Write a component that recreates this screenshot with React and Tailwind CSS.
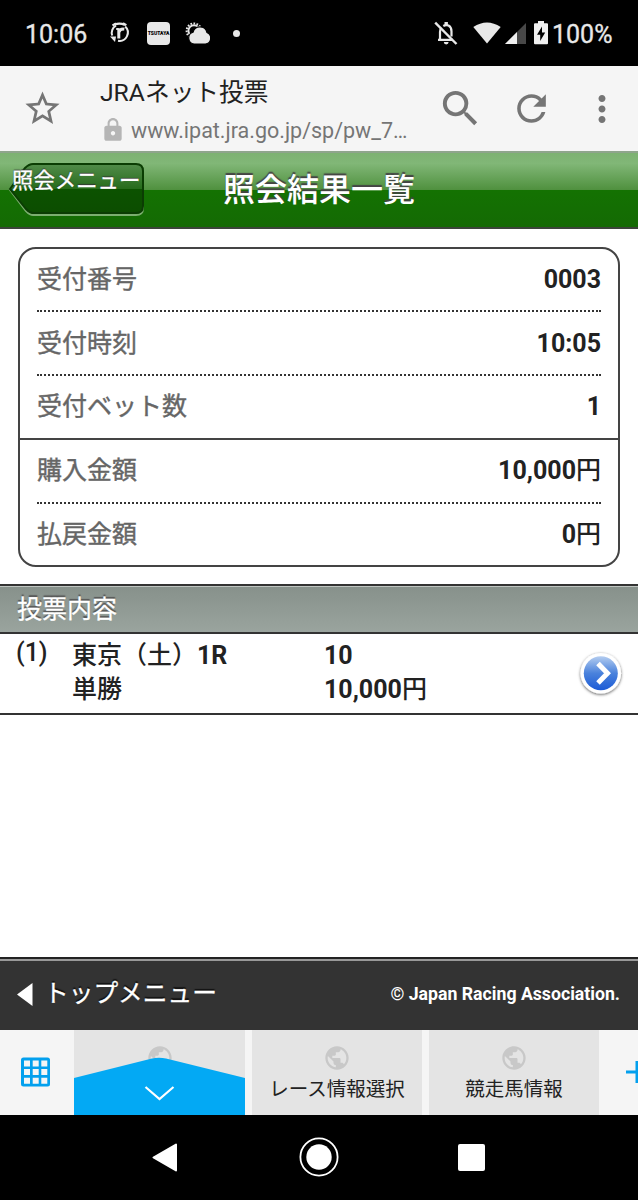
import React from "react";
import { MdStarBorder, MdLock, MdSearch, MdRefresh, MdMoreVert, MdPublic } from "react-icons/md";

const details = [
  { label: "受付番号", value: "0003", line: "dotted", pad: "pt-[2px]" },
  { label: "受付時刻", value: "10:05", line: "dotted", pad: "pt-[2px]" },
  { label: "受付ベット数", value: "1", line: "solid", pad: "" },
  { label: "購入金額", value: "10,000", unit: "円", line: "dotted", pad: "" },
  { label: "払戻金額", value: "0", unit: "円", line: "none", pad: "pb-[2px]" },
];

function StatusBar() {
  return (
    <div className="flex h-[66px] items-center bg-black text-[25px] leading-none text-[#e8e8e8]">
      <span className="ml-[25px] w-[64px] whitespace-nowrap pt-[2px] [-webkit-text-stroke:0.3px]">10:06</span>
      <svg className="ml-[20px]" width="22" height="22" viewBox="0 0 22 22" fill="none" stroke="currentColor">
        <path d="M7 3.6A8.2 8.2 0 0 0 3.2 13.5M9 18.8A8.3 8.3 0 0 0 16.2 4.6" strokeWidth="2" />
        <path d="M3.5 3.5 7 1.5M14 1.3l3.4 1.8M6 2.6Q10.5.5 16 3" strokeWidth="2.2" />
        <path d="M9.8 16.5V6.3M10 10Q11 6.6 15.3 7.2" strokeWidth="3" />
        <path d="M7.2 7h2.5" strokeWidth="2" />
        <path d="M1 14.5h6L6 20z" fill="currentColor" stroke="none" />
      </svg>
      <span className="ml-[16px] flex h-[23px] w-[23px] items-center justify-center rounded-[4px] bg-[#e8e8e8] text-[5px] font-black text-black">TSUTAYA</span>
      <svg className="ml-[15px]" width="25" height="23" viewBox="0 0 25 23">
        <circle cx="9" cy="8.8" r="7.4" fill="none" stroke="#e8e8e8" strokeWidth="2" strokeDasharray="1.7 1.4" />
        <circle cx="9" cy="8.8" r="5.6" fill="none" stroke="#e8e8e8" strokeWidth="2" />
        <path d="M9 22a6 6 0 0 1-1-11.7A7.2 7.2 0 0 1 22 10.5a6 6 0 0 1-1.5 11.5z" fill="#e8e8e8" stroke="#000" strokeWidth="1.2" />
      </svg>
      <span className="ml-[23px] h-[7px] w-[7px] rounded-full bg-[#e8e8e8]" />
      <svg className="ml-[194px]" width="24" height="24" viewBox="0 0 24 24" fill="none" stroke="currentColor" strokeWidth="2">
        <path d="M4 18.8h15M6 18v-7q0-2.5 1.3-4.3M9.3 5Q12 3.4 14.5 4.6q3 1.5 3 5.9v5" strokeWidth="2.2" />
        <path d="M12.2 1v3" strokeWidth="3.4" />
        <path d="M1.2 1.7 22.5 23" strokeWidth="2.4" />
        <path d="M9.8 21h4.8a2.4 2.4 0 0 1-4.8 0z" fill="currentColor" stroke="none" />
      </svg>
      <svg className="ml-[15px]" width="28" height="22" viewBox="0 0 28 22" fill="currentColor">
        <path d="M.3 5Q14-4.2 27.7 5L14 21.5z" />
      </svg>
      <svg className="ml-[4px]" width="21" height="21" viewBox="0 0 21 21">
        <path d="M0 21 21 0v21z" fill="#484848" />
        <path d="M0 21 12 9v12z" fill="#f0f0f0" />
      </svg>
      <svg className="ml-[8px]" width="14" height="24" viewBox="0 0 14 24">
        <path d="M4 0h6v2.3h3q1 0 1 1v19q0 1-1 1H1q-1 0-1-1v-19q0-1 1-1h3z" fill="#f0f0f0" />
        <path d="m8 5.5-5 8.3h3.2V20l5-8.5H8z" fill="#000" />
      </svg>
      <span className="ml-[4px] whitespace-nowrap pt-[2px] [-webkit-text-stroke:0.3px]">100%</span>
    </div>
  );
}

function Toolbar() {
  return (
    <div className="flex h-[85px] bg-[#f5f5f5] text-[#757575]">
      <MdStarBorder className="mt-[22px] ml-[22px] h-[41px] w-[41px] shrink-0" />
      <div className="ml-[36px] w-[320px] shrink-0">
        <div className="mt-[8px] h-[37px] pl-px text-[24.7px] leading-[38px] whitespace-nowrap text-[#212121]">JRAネット投票</div>
        <div className="flex h-[38px] items-center">
          <MdLock className="mr-[5px] ml-[1px] h-[26px] w-[26px] text-[#b5b5b5]" />
          <span className="pt-[2px] text-[21.5px] leading-[36px] whitespace-nowrap">www.ipat.jra.go.jp/sp/pw_7…</span>
        </div>
      </div>
      <MdSearch className="mt-[19px] ml-[18px] h-[47px] w-[47px] shrink-0" />
      <MdRefresh className="mt-[21px] ml-[26px] h-[43px] w-[43px] shrink-0" />
      <MdMoreVert className="mt-[22px] ml-[28px] h-[42px] w-[42px] shrink-0" />
    </div>
  );
}

function PageHeader() {
  return (
    <div className="relative flex h-[78px] justify-center border-t-2 border-b-2 border-t-[#8fa58c] border-b-[#3c443a] bg-[linear-gradient(#7db272_0,#81b777_14%,#50913f_49.5%,#147202_50%,#146a04_100%)]">
      <svg className="absolute top-[9px] left-[8px]" width="138" height="55" viewBox="0 0 138 55">
        <defs>
          <linearGradient id="back" x1="0" y1="0" x2="0" y2="1">
            <stop offset="0" stopColor="#528c4a" />
            <stop offset=".5" stopColor="#276c1c" />
            <stop offset=".51" stopColor="#0c5200" />
            <stop offset="1" stopColor="#0c4d00" />
          </linearGradient>
        </defs>
        <path d="M2 28 17 7Q21 3 25 3H128Q135 3 135 10V46Q135 53 128 53H25Q22 53 18 49z" fill="none" stroke="#7cae70" strokeWidth="2" />
        <path d="M2 27 17 6Q21 2 25 2H128Q135 2 135 9V44Q135 51 128 51H25Q22 51 18 47z" fill="url(#back)" stroke="#0b3d03" strokeWidth="2" />
      </svg>
      <span className="absolute top-[12px] left-[12px] text-[21.4px] leading-[32px] whitespace-nowrap text-white [-webkit-text-stroke:0.3px] [text-shadow:0_-1px_1px_#333]">照会メニュー</span>
      <h1 className="h-[72px] text-[32px] leading-[74px] font-medium whitespace-nowrap text-white [text-shadow:0_-2px_1px_#444]">照会結果一覧</h1>
    </div>
  );
}

function DetailRow({ label, value, unit, line, pad }) {
  const border = line === "dotted" ? "border-b-2 border-dotted border-[#333]" : "";
  return (
    <div className={line === "solid" ? "h-16 border-b-2 border-[#444] px-[17px]" : "h-16 px-[17px]"}>
      <div className={`flex h-full items-center justify-between ${border} ${pad} text-[25px]`}>
        <span className="text-[#666] [-webkit-text-stroke:0.4px]">{label}</span>
        <span className="font-bold text-[#222]">
          {value}
          {unit && <span className="font-medium">{unit}</span>}
        </span>
      </div>
    </div>
  );
}

function BetRow() {
  return (
    <div className="flex h-[81px] border-b-2 border-[#333] text-[25px] leading-[34px] font-bold text-[#222]">
      <span className="mt-[2px] ml-[16px] w-[56px] font-medium">(1)</span>
      <div className="mt-[5px] w-[252px] whitespace-nowrap">
        <div><span className="font-medium">東京（土）</span>1R</div>
        <div className="font-medium">単勝</div>
      </div>
      <div className="mt-[5px] w-[250px]">
        <div>10</div>
        <div>10,000<span className="font-medium">円</span></div>
      </div>
      <svg className="mt-[14px]" width="54" height="54" viewBox="0 0 54 54">
        <defs>
          <linearGradient id="go" x1="0" y1="0" x2="0" y2="1">
            <stop offset="0" stopColor="#b4cdf0" />
            <stop offset=".5" stopColor="#4a82dc" />
            <stop offset="1" stopColor="#1c5bd6" />
          </linearGradient>
          <filter id="shade" x="-30%" y="-30%" width="160%" height="160%">
            <feDropShadow dx="0" dy="1" stdDeviation="1.5" floodColor="#000" floodOpacity=".65" />
          </filter>
        </defs>
        <circle cx="26.8" cy="25.2" r="20.3" fill="#fff" filter="url(#shade)" />
        <circle cx="26.8" cy="25.2" r="17" fill="url(#go)" />
        <path d="m24 15.5 9.5 9.7-9.5 9.7" fill="none" stroke="#fff" strokeWidth="5" />
      </svg>
    </div>
  );
}

function Tab({ label }) {
  return (
    <div className="mr-[7px] flex h-full w-[170px] shrink-0 flex-col items-center bg-[#e4e4e4] pt-[14px]">
      <MdPublic className="h-[28px] w-[28px] text-[#c8c8c8]" />
      <span className="mt-[3px] text-[19.5px] leading-[30px] whitespace-nowrap text-[#222]">{label}</span>
    </div>
  );
}

function TabBar() {
  return (
    <div className="flex h-[85px] overflow-hidden bg-[#f5f5f5]">
      <svg className="mt-[27px] mr-[24px] ml-[21px] shrink-0" width="29" height="30" viewBox="0 0 29 30">
        <rect y=".5" width="29" height="29" rx="2.5" fill="#03a0ee" />
        <path d="M3 3.5h6v6H3zM11.7 3.5h6v6h-6zM20.3 3.5h6v6h-6zM3 12h6v6H3zM11.7 12h6v6h-6zM20.3 12h6v6h-6zM3 20.7h6v6H3zM11.7 20.7h6v6h-6zM20.3 20.7h6v6h-6z" fill="#f5f5f5" />
      </svg>
      <div className="relative mr-[7px] flex h-full w-[171px] shrink-0 justify-center bg-[#e4e4e4] pt-[14px]">
        <MdPublic className="h-[28px] w-[28px] text-[#c8c8c8]" />
        <svg className="absolute inset-0" width="171" height="85" viewBox="0 0 171 85">
          <path d="M0 48 78 28.5Q85 27 92 28.5L171 48V85H0z" fill="#03a9f4" />
          <path d="m71.5 57 14 12 14-12" fill="none" stroke="#fff" strokeWidth="2.2" />
        </svg>
      </div>
      <Tab label="レース情報選択" />
      <Tab label="競走馬情報" />
      <svg className="mt-[31px] ml-[20px] shrink-0" width="22" height="22" viewBox="0 0 22 22" stroke="#03a0ee" strokeWidth="3">
        <path d="M0 11h22M11 0v22" />
      </svg>
    </div>
  );
}

function NavBar() {
  return (
    <div className="flex h-[85px] items-center bg-black">
      <svg className="ml-[151px]" width="27" height="30" viewBox="0 0 27 30">
        <path d="M2.5 14.5 25 1.5v26z" fill="#fff" stroke="#fff" strokeWidth="2" strokeLinejoin="round" />
      </svg>
      <svg className="-mt-px ml-[121px]" width="40" height="40" viewBox="0 0 40 40">
        <circle cx="20" cy="20" r="18.6" fill="none" stroke="#fff" strokeWidth="1.8" />
        <circle cx="20" cy="20" r="12.7" fill="#fff" />
      </svg>
      <div className="ml-[119px] h-[27px] w-[27px] rounded-[2px] bg-white" />
    </div>
  );
}

export default function App() {
  return (
    <div className="flex h-[1200px] w-[638px] flex-col overflow-hidden bg-white font-['Roboto','Noto_Sans_CJK_JP',sans-serif]">
      <StatusBar />
      <Toolbar />
      <PageHeader />
      <div className="mx-[18px] mt-[18px] h-[320px] overflow-hidden rounded-[18px] border-2 border-[#444]">
        <div className="-mt-px">
          {details.map((d) => (
            <DetailRow key={d.label} {...d} />
          ))}
        </div>
      </div>
      <div className="mt-[17px] h-[50px] border-t-2 border-b-2 border-[#333]">
        <div className="h-full border-t border-[#bfc5c1] bg-[linear-gradient(#87918b,#9aa49e)] pl-[17px] text-[25px] leading-[46px] text-white [-webkit-text-stroke:0.3px] [text-shadow:0_-2px_1px_#555]">投票内容</div>
      </div>
      <BetRow />
      <div className="flex-1" />
      <div className="flex h-[73px] items-center border-t-2 border-[#222] bg-[#333] text-white">
        <div className="flex h-full w-full items-center border-t-2 border-[#999] pb-[2px]">
          <svg className="ml-[17px] shrink-0" width="16" height="23" viewBox="0 0 16 23">
            <path d="M0 11.5 15.5 0v23z" fill="#fff" />
          </svg>
          <span className="ml-[11px] flex-1 pb-[1px] text-[24.7px] leading-[34px] whitespace-nowrap [-webkit-text-stroke:0.3px] [text-shadow:0_-2px_1px_#111]">トップメニュー</span>
          <span className="mr-[18px] text-[17.7px] font-bold whitespace-nowrap">© Japan Racing Association.</span>
        </div>
      </div>
      <TabBar />
      <NavBar />
    </div>
  );
}
